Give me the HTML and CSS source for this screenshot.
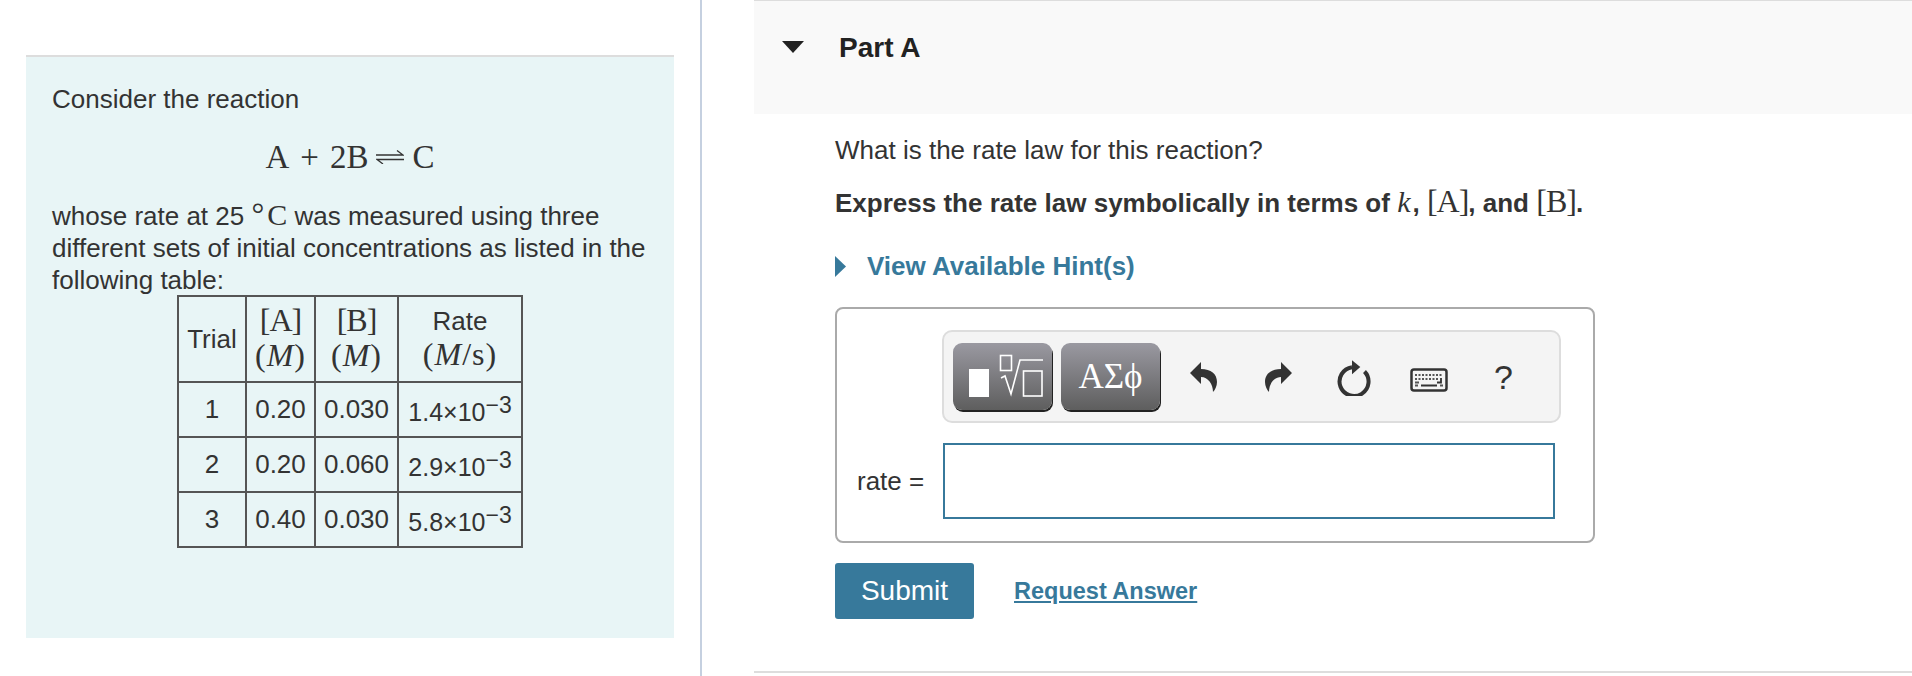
FILE: index.html
```html
<!DOCTYPE html>
<html lang="en">
<head>
  <meta charset="UTF-8">
  <title>Part A</title>
  <link rel="stylesheet" href="styles.css">
</head>
<body>
  <div class="left-col">
    <div class="intro">
      <p>Consider the reaction</p>
      <div class="equation">
        <span>A</span><span class="plus">+</span><span>2B</span>
        <svg class="harpoons" width="28" height="14" viewBox="0 0 28 14">
          <path d="M0 5H27L21 0.500M28 9.500H1L7 14" fill="none" stroke="#333" stroke-width="1.300"/>
        </svg>
        <span>C</span>
      </div>
      <p>whose rate at 25 <span class="math deg">°</span><span class="math big">C</span> was measured using three<br>different sets of initial concentrations as listed in the<br>following table:</p>
      <table class="data-table">
        <tr class="head-row">
          <th class="col-trial">Trial</th>
          <th class="col-a"><span class="math brackets">[A]</span><br><span class="math">(<i>M</i>)</span></th>
          <th class="col-b"><span class="math brackets">[B]</span><br><span class="math">(<i>M</i>)</span></th>
          <th class="col-rate">Rate<br><span class="math">(<i>M</i>/s)</span></th>
        </tr>
        <tr><td>1</td><td>0.20</td><td>0.030</td><td class="rate">1.4×10<sup>−3</sup></td></tr>
        <tr><td>2</td><td>0.20</td><td>0.060</td><td class="rate">2.9×10<sup>−3</sup></td></tr>
        <tr><td>3</td><td>0.40</td><td>0.030</td><td class="rate">5.8×10<sup>−3</sup></td></tr>
      </table>
    </div>
  </div>

  <div class="right-col">
    <div class="part-header">
      <svg class="part-arrow" width="22" height="12" viewBox="0 0 22 12"><path d="M0 0H22L11 12Z" fill="#222"/></svg>
      <h2>Part A</h2>
    </div>
    <div class="part-body">
      <p class="question">What is the rate law for this reaction?</p>
      <p class="question strong">Express the rate law symbolically in terms of <i class="math big var-k">k</i>, <span class="math brackets">[A]</span>, and <span class="math brackets">[B]</span>.</p>
      <div class="hint">
        <svg width="11" height="21" viewBox="0 0 11 21"><path d="M0 0L11 10.500L0 21Z" fill="#37799b"/></svg>
        <span>View Available Hint(s)</span>
      </div>

      <div class="answer-box">
        <div class="toolbar">
          <div class="tool-btn">
            <svg width="99" height="67" viewBox="0 0 99 67">
              <rect x="16" y="26" width="20" height="28" fill="#fff"/>
              <rect x="47.500" y="12.500" width="11" height="15" fill="none" stroke="#fff" stroke-width="1.600"/>
              <path d="M48 35L52 33L58 51L67 17H90" fill="none" stroke="#fff" stroke-width="1.600"/>
              <rect x="70.500" y="28" width="18.500" height="25" fill="none" stroke="#fff" stroke-width="1.600"/>
            </svg>
          </div>
          <div class="tool-btn greek">ΑΣϕ</div>
          <div class="tool-icons">
            <span class="tool-slot"><svg width="27" height="30" viewBox="0 0 27 30"><path d="M0 11L11 0V7C21 7 27 12 27 20C27 24 25 28 23 30C23 22 18 15 11 15V22Z" fill="#333"/></svg></span>
            <span class="tool-slot"><svg width="27" height="30" viewBox="0 0 27 30"><path d="M27 11L16 0V7C6 7 0 12 0 20C0 24 2 28 4 30C4 22 9 15 16 15V22Z" fill="#333"/></svg></span>
            <span class="tool-slot reset"><svg width="34" height="36" viewBox="0 0 34 36">
              <path d="M27.500 11.500A14.500 14.500 0 1 1 15 7.200" fill="none" stroke="#333" stroke-width="4"/>
              <path d="M15 0.300L23.300 7L15 14.300Z" fill="#333"/>
            </svg></span>
            <span class="tool-slot keys"><svg width="38" height="24" viewBox="0 0 38 24">
              <rect x="1.500" y="1.500" width="35" height="21" rx="2.500" fill="none" stroke="#333" stroke-width="2.500"/>
              <path d="M5 7H33M5 11H28" stroke="#555" stroke-width="2" stroke-dasharray="2 1.500"/>
              <path d="M31 10V14.500H27M11 17.500H27" fill="none" stroke="#333" stroke-width="1.800"/>
              <path d="M5 14.500H9M5 17.500H8M30 17.500H33" stroke="#555" stroke-width="1.800"/>
            </svg></span>
            <span class="tool-slot help">?</span>
          </div>
        </div>
        <div class="answer-row">
          <label class="answer-label" for="rate">rate =</label>
          <input class="answer-input" id="rate" type="text">
        </div>
      </div>

      <div class="actions">
        <button class="submit-btn">Submit</button>
        <a class="request-link" href="#">Request Answer</a>
      </div>
    </div>
    <div class="part-footer"></div>
  </div>
</body>
</html>
```

FILE: styles.css
```css
* {
  box-sizing: border-box;
}

html {
  height: 676px;
  overflow: hidden;
}

body {
  margin: 0;
  display: flex;
  height: 676px;
  overflow: hidden;
  background: #fff;
  color: #333;
  font-family: "Liberation Sans", Arial, sans-serif;
  font-size: 26px;
  line-height: 32px;
}

p {
  margin: 0;
}

.math {
  font-family: "Liberation Serif", "Times New Roman", serif;
}

.big {
  font-size: 30px;
  line-height: 0;
}

.brackets {
  font-size: 32px;
  line-height: 0;
  letter-spacing: -1px;
}

.var-k {
  margin-right: 2px;
}

.deg {
  font-size: 32px;
  line-height: 0;
  margin-right: 3px;
}

/* left side */
.left-col {
  width: 702px;
  flex-shrink: 0;
  padding: 55px 0 38px 26px;
  border-right: 2px solid #c5d0e0;
}

.intro {
  width: 648px;
  height: 583px;
  padding: 26px 26px 0;
  background: #e8f5f6;
  border-top: 2px solid #ddd;
}

.equation {
  display: flex;
  justify-content: center;
  align-items: center;
  gap: 8px;
  height: 32px;
  margin: 26px 0 27px;
  font-family: "Liberation Serif", "Times New Roman", serif;
  font-size: 33px;
}

.plus {
  margin: 0 3px;
}

.data-table {
  width: 344px;
  margin: -1px auto 0;
  border-collapse: collapse;
  table-layout: fixed;
  font-size: 26px;
  line-height: 33px;
}

.data-table th,
.data-table td {
  border: 2px solid #555;
  padding: 0;
  text-align: center;
  font-weight: normal;
  height: 55px;
}

.data-table .head-row th {
  height: 86px;
}

.data-table .math {
  font-size: 32px;
  line-height: 33px;
  letter-spacing: 1px;
}

.data-table .brackets {
  letter-spacing: -1px;
}

.col-trial { width: 68px; }
.col-a { width: 69px; }
.col-b { width: 83px; }
.col-rate { width: 124px; }

.data-table .rate {
  white-space: nowrap;
  font-size: 25px;
  padding-top: 6px;
}

.rate sup {
  font-size: 23px;
  line-height: 0;
  position: relative;
  top: -8px;
  vertical-align: baseline;
}

/* right side */
.right-col {
  flex: 1;
  margin-left: 52px;
  display: flex;
  flex-direction: column;
}

.part-header {
  display: flex;
  align-items: flex-start;
  height: 114px;
  background: #f9f9f9;
  border-top: 1px solid #ddd;
  padding: 31px 0 0 28px;
}

.part-arrow {
  margin-top: 9px;
}

.part-header h2 {
  margin: 0 0 0 35px;
  font-size: 28px;
  line-height: 32px;
  color: #222;
}

.part-body {
  flex: 1;
  padding: 20px 0 0 81px;
}

.question {
  margin-bottom: 21px;
}

.strong {
  font-weight: bold;
}

.strong .math {
  font-weight: normal;
}

.hint {
  display: flex;
  align-items: center;
  gap: 21px;
  margin-top: 31px;
  height: 32px;
  color: #37799b;
  font-weight: bold;
}

.answer-box {
  width: 760px;
  height: 236px;
  margin-top: 25px;
  padding: 21px 0 0 20px;
  border: 2px solid #aaa;
  border-radius: 8px;
}

.toolbar {
  display: flex;
  align-items: center;
  width: 619px;
  height: 93px;
  margin-left: 85px;
  padding-left: 9px;
  background: #f4f4f4;
  border: 2px solid #ddd;
  border-radius: 10px;
}

.tool-btn {
  width: 99px;
  height: 67px;
  margin-right: 9px;
  display: flex;
  align-items: center;
  justify-content: center;
  background: linear-gradient(#9a99a1, #5e5e5e);
  border-radius: 9px;
  box-shadow: 1px 2px 0 #222;
}

.greek {
  margin-right: 6px;
  color: #fff;
  font-family: "Liberation Serif", "Times New Roman", serif;
  font-size: 35px;
}

.tool-icons {
  display: flex;
  align-items: center;
}

.tool-slot {
  display: flex;
  justify-content: center;
  width: 75px;
}

.reset {
  margin-top: 2px;
}

.keys {
  margin-top: 6px;
}

.help {
  font-size: 34px;
}

.answer-row {
  display: flex;
  align-items: center;
  margin-top: 20px;
}

.answer-label {
  width: 86px;
}

.answer-input {
  width: 612px;
  height: 76px;
  border: 2px solid #37799b;
  background: #fff;
  outline: none;
}

.actions {
  display: flex;
  align-items: center;
  margin-top: 20px;
}

.submit-btn {
  width: 139px;
  height: 56px;
  padding: 0;
  background: #37799b;
  color: #fff;
  border: none;
  border-radius: 3px;
  font-family: inherit;
  font-size: 28px;
}

.request-link {
  margin-left: 40px;
  color: #37799b;
  font-size: 23.500px;
  font-weight: bold;
}

.part-footer {
  height: 2px;
  margin-bottom: 3px;
  background: #ddd;
}
```
